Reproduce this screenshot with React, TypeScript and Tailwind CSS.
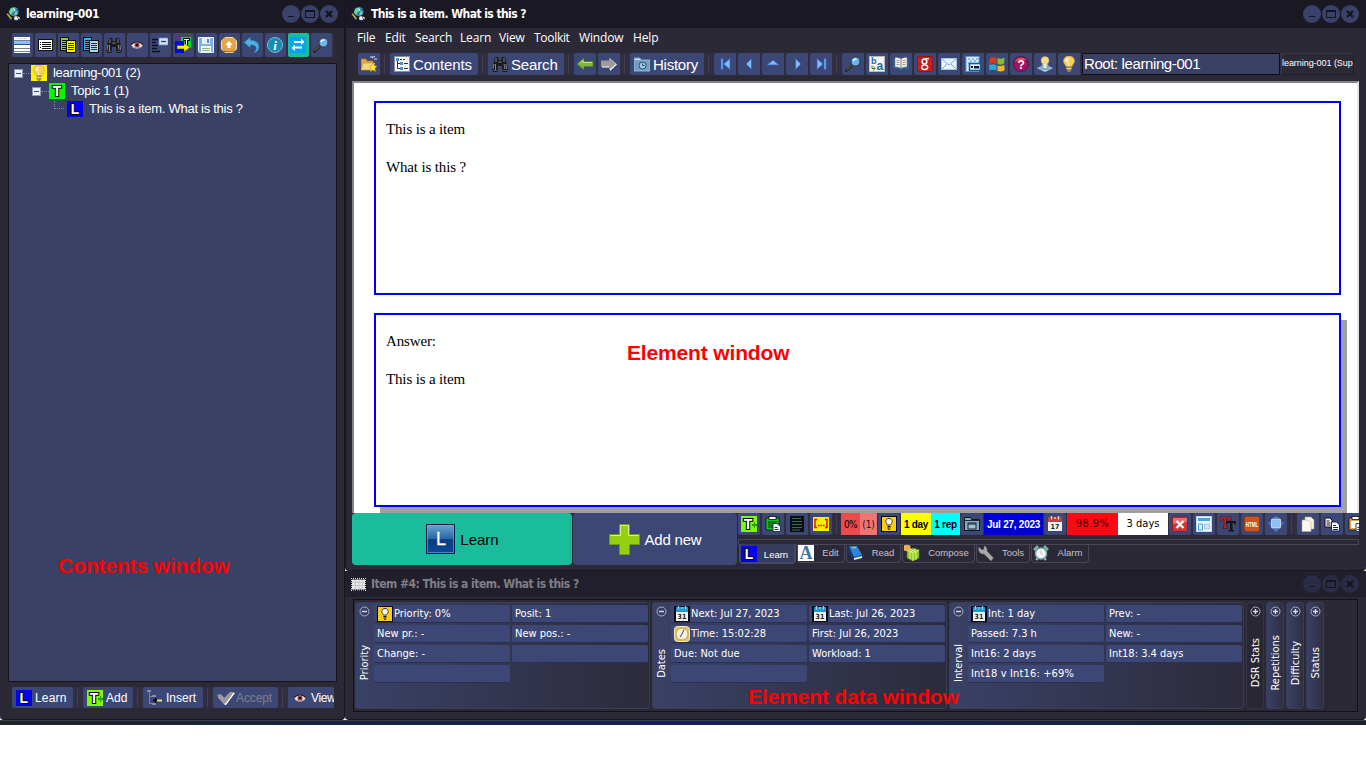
import React from "react";

type Kids = { children?: React.ReactNode };

const Svg = ({ children, className = "w-4 h-4", box = "0 0 16 16" }: Kids & { className?: string; box?: string }) => (
  <svg viewBox={box} className={"shrink-0 block " + className}>{children}</svg>
);

/* ---------- icons ---------- */
const AppIcon = () => (
  <Svg className="w-[15px] h-4">
    <circle cx="8.500" cy="5.500" r="5" fill="#3f7fa8" />
    <path d="M5 2l4-1 1 3-3 2-2 3-2-3zM10 5l3 0-1 4-3 0z" fill="#6fd3a4" />
    <path d="M8 2l2 1-1 2z" fill="#dff6ff" />
    <path d="M12 2.500c1.500 2 1.500 5 0 7" stroke="#1c3a9a" fill="none" />
    <path d="M0 8l2-1 5 6-2 1z" fill="#c9b544" stroke="#000" strokeWidth=".5" />
    <path d="M0 15l3-2 3 2z" fill="#16207c" />
    <circle cx="11" cy="12.500" r="2.400" fill="#f4f4f4" />
    <path d="M11 9.500l4 2v2.500l-2-1z" fill="#e8e8e8" stroke="#111" strokeWidth=".6" />
    <path d="M8 14.500l2 1.500 4-1-1-1z" fill="#1a2a80" />
  </Svg>
);
const Letter = ({ c, bg, plus }: { c: string; bg: string; plus?: boolean }) => (
  <Svg>
    <rect width="16" height="16" fill={bg} />
    <text x={plus ? 7 : 8} y="13" textAnchor="middle" fontFamily="Liberation Sans, sans-serif" fontWeight="700" fontSize="14" fill="#fff" stroke="#000" strokeWidth="2.200" paintOrder="stroke">{c}</text>
    {plus && <path d="M11 8h2V6h1v2h2v2h-2v2h-1v-2h-2z" fill="#2c9a1c" />}
  </Svg>
);
const Bulb = ({ bg }: { bg?: string }) => (
  <Svg>
    {bg && <rect width="16" height="16" fill={bg} />}
    <path d="M8 0C4.600 0 2.500 2.300 2.500 5c0 2.300 1.800 3.300 2.500 5.500h6C11.700 8.300 13.500 7.300 13.500 5c0-2.700-2.100-5-5.500-5z" fill="#f6cf5c" stroke="#d8a233" strokeWidth=".6" />
    <path d="M6 2c-1.500.5-2.200 2-1.500 3.500L7 6l1-4z" fill="#fff6cf" />
    <path d="M7.500 6v4" stroke="#fff3b0" />
    <path d="M5.500 10.500h5v3L9 16H7l-1.500-2.500z" fill="#a98a4d" />
    <path d="M5.500 12.500h5" stroke="#e8d9a8" />
  </Svg>
);
const ListIcon = () => (
  <Svg>
    <rect y="0" width="16" height="16" fill="#fff" />
    <path d="M0 3.500h16M0 11.500h16M0 14.500h16" stroke="#7b808e" />
    <rect y="4" width="16" height="3" fill="#8fc0f5" />
    <path d="M0 7.500h16" stroke="#24518f" />
    <path d="M3 1.500h10" stroke="#ddd" />
  </Svg>
);
const LinesIcon = () => (
  <Svg>
    <rect x="1" y="2" width="15" height="12" fill="#111" />
    <rect x="2" y="3" width="13" height="10" fill="#fff" />
    <path d="M3 5.500h1M3 7.500h1M3 10.500h1M5 5.500h9M5 7.500h9M5 9.500h9M5 11.500h9" stroke="#111" />
  </Svg>
);
const DocsIcon = ({ a, b }: { a: string; b: string }) => (
  <Svg>
    <rect x=".5" y=".5" width="8" height="13" fill={a} stroke="#111" />
    <path d="M2 3.500h5M2 5.500h4M2 7.500h4M2 9.500h4M2 11.500h4" stroke="#111" />
    <rect x="6.500" y="3.500" width="9" height="12" fill={b} stroke="#111" />
    <path d="M8 6.500h6M8 8.500h6M8 10.500h6M8 12.500h6" stroke="#333" />
  </Svg>
);
const Binoculars = () => (
  <Svg>
    <path d="M3 1h3.500v3H9.500V1H13l1.500 6 1.500 6-1 3h-4.500l-.5-6H6l-.5 6H1l-1-3 1.500-6z" fill="#1b1b1e" />
    <path d="M4 2v4M2 8l-1 5M12 2v4M12 8l1 5M3.500 8v6M14 8l.5 5" stroke="#85858c" />
    <path d="M6.500 5h3v2h-3z" fill="#55555c" />
    <path d="M1 14.500h4M11 14.500h4" stroke="#55555c" />
  </Svg>
);
const Eye = () => (
  <Svg>
    <path d="M2 8c3-4 9-4 12 0-3 3.500-9 4-12 0z" fill="#f3eaea" />
    <path d="M2 8c3-4 9-4 12 0" fill="none" stroke="#2b1b22" strokeWidth="1.100" />
    <circle cx="8" cy="8" r="2.600" fill="#9c4a4d" />
    <circle cx="8" cy="8" r="1.300" fill="#1a0b0e" />
    <path d="M3 9.500c3 2.300 7 2.300 10 0" fill="none" stroke="#c9a9a9" />
  </Svg>
);
const LayoutIcon = () => (
  <Svg>
    <path d="M0 2.500h6M0 5.500h4M0 8.500h6M0 11.500h5M0 14.500h8" stroke="#0f0f18" strokeWidth="1.300" />
    <rect x="7" y="1" width="9" height="7" fill="#cfe2fa" stroke="#6d8fc0" strokeWidth=".7" />
    <path d="M9 4.500h5" stroke="#24406f" strokeWidth="1.300" />
  </Svg>
);
const ExportIcon = () => (
  <Svg>
    <rect x="6" width="10" height="11" fill="#00dc2a" />
    <rect y="4" width="9" height="12" fill="#0007e0" />
    <path d="M8 2.500h7M11.500 2v8" stroke="#000" strokeWidth="3" />
    <path d="M9 2.500h5M11.500 3v6" stroke="#fff" strokeWidth="1" />
    <path d="M2 8.500h7V6l6 4.500L9 15v-3H2z" fill="#ffee00" stroke="#333" strokeWidth=".5" />
  </Svg>
);
const Floppy = () => (
  <Svg>
    <path d="M.5.500h15v15h-14l-1-1z" fill="#7fb0e6" stroke="#e3effc" />
    <rect x="4" y="1" width="8" height="6" fill="#e9f2fb" />
    <rect x="9" y="2" width="2" height="4" fill="#5a8cc6" />
    <rect x="3" y="9" width="10" height="6" fill="#f7faf3" />
    <path d="M4 11.500h8M4 13.500h8" stroke="#8fbf7a" />
  </Svg>
);
const UpBox = () => (
  <Svg>
    <path d="M4 .5h8L15.500 4v8L12 15.500H4L.5 12V4z" fill="#e3a646" stroke="#f7dfa4" />
    <path d="M2 14c4 1 8 1 12 0" stroke="#a8681d" fill="none" />
    <path d="M8 4l3.500 4H9.500v3h-3V8h-2z" fill="#fff" />
  </Svg>
);
const Undo = () => (
  <Svg>
    <path d="M0 5.500L6.500 0v3.200C12 3.200 15.500 6 15 10.500c-.3 3-2.500 5-5.500 5.500 2-2 3-3.500 2.500-5.500C11.500 8.500 9.500 8 6.500 8v3z" fill="#4fb0e2" stroke="#1e6fa8" strokeWidth=".6" />
  </Svg>
);
const Info = () => (
  <Svg>
    <circle cx="8" cy="8" r="7.500" fill="#168bb4" stroke="#7dc8e2" strokeWidth=".9" />
    <text x="8" y="12.500" textAnchor="middle" fontFamily="Liberation Serif, serif" fontStyle="italic" fontWeight="700" fontSize="13" fill="#fff">i</text>
  </Svg>
);
const Swap = () => (
  <Svg>
    <rect width="16" height="16" fill="#04a4ee" />
    <path d="M4 4h7V1.500L14.500 5 11 8V6H4zM12 9.500H5V7.500L1.500 11 5 14v-2.500h7z" fill="#fff" />
  </Svg>
);
const Magnifier = () => (
  <Svg>
    <path d="M1.500 14.500l6-6" stroke="#2b2825" strokeWidth="3" strokeLinecap="round" />
    <path d="M1.500 14l5-5" stroke="#8a7c70" strokeWidth=".8" />
    <circle cx="10.500" cy="5.500" r="4.600" fill="#6fb5ea" stroke="#39424f" strokeWidth="1.400" />
    <path d="M8 5c.5-1.500 2-2.200 3.500-2" stroke="#e8f6ff" strokeWidth="1.500" fill="none" />
  </Svg>
);
const FolderStar = () => (
  <Svg>
    <path d="M0 3h5l1 2h6v9H0z" fill="#e6a83b" stroke="#a97618" strokeWidth=".6" />
    <path d="M2 7h12l-2.500 7H0z" fill="#f8d67c" stroke="#b98322" strokeWidth=".5" />
    <path d="M9 1l3 0M11 2l3-2M13 3h3" stroke="#dce6f6" />
    <path d="M12 7l1.300 2.700 2.700.5-2 2 .5 3.300L12 14l-2.500 1.500.5-3.300-2-2 2.700-.5z" fill="#ffec3a" stroke="#c98d08" strokeWidth=".5" />
  </Svg>
);
const ContentsIcon = () => (
  <Svg>
    <rect x=".5" y=".5" width="15" height="15" fill="#f3f4f6" stroke="#8c8f97" />
    <path d="M3.500 4v8.500h3M3.500 7.500h3" stroke="#333" fill="none" />
    <path d="M2 2h3v3H2zM6 6h3v3H6zM6 11h3v3H6z" fill="#4f8fca" />
    <path d="M6 3.500h2M9 3.500h2M10 7.500h4M10 12.500h4" stroke="#333" />
  </Svg>
);
const ArrowL = () => (
  <Svg><path d="M0 8l7-6v3.500h9v5H7V14z" fill="#7db83a" stroke="#4a7d1b" strokeWidth=".6" /><path d="M3 7l3-2.500v2h9" fill="none" stroke="#c3e48c" /></Svg>
);
const ArrowR = () => (
  <Svg><path d="M.5 5h8V2l7.500 6.500L9 15v-3.500H1z" fill="#fff" /><path d="M0 4.500h8V2l7 6-7 6v-3.500H0z" fill="#9b9b9b" /></Svg>
);
const HistoryIcon = () => (
  <Svg>
    <path d="M0 2h6l1 2h9v11H0z" fill="#6f9fc2" stroke="#b2d3e8" strokeWidth=".7" />
    <path d="M1 3.500h5" stroke="#d7ecf9" />
    <circle cx="8.500" cy="9.500" r="3.500" fill="#a6c8de" stroke="#28506f" />
    <path d="M8.500 7.500v2h2" fill="none" stroke="#28506f" />
  </Svg>
);
const Nav = ({ d }: { d: string }) => (
  <Svg><path d={d} fill="#82b9f5" stroke="#2d62b8" strokeWidth=".8" /></Svg>
);
const Translate = () => (
  <Svg>
    <rect x=".5" y=".5" width="15" height="15" fill="#f5f5f1" stroke="#b9b9b2" />
    <text x="2" y="8" fontFamily="Liberation Sans, sans-serif" fontWeight="700" fontSize="9" fill="#1a6aa8">b</text>
    <text x="7.500" y="13.500" fontFamily="Liberation Sans, sans-serif" fontWeight="700" fontSize="12" fill="#1a6aa8">a</text>
    <path d="M3 9.500v3h3M4.500 10.500l1.500 2-1.500 2" fill="none" stroke="#3c8a25" />
  </Svg>
);
const Book = () => (
  <Svg>
    <path d="M0 3h16v10H10l-1 1.500H7L6 13H0z" fill="#2b6092" />
    <path d="M2 1.500c3 0 5 .5 6 1.500v9.500c-1-1-3-1.500-6-1.500zM14 1.500c-3 0-5 .5-6 1.500v9.500c1-1 3-1.500 6-1.500z" fill="#f2efe6" stroke="#777" strokeWidth=".5" />
    <path d="M3.500 4.500h3M3.500 6.500h3M3.500 8.500h3M9.500 4.500h3M9.500 6.500h3M9.500 8.500h3" stroke="#888" strokeWidth=".8" />
  </Svg>
);
const G8 = () => (
  <Svg>
    <rect x=".3" y=".3" width="15.400" height="15.400" rx="2.500" fill="#c81d1d" stroke="#7b0b0b" strokeWidth=".7" />
    <ellipse cx="7.500" cy="5.500" rx="2.300" ry="2.500" fill="none" stroke="#fff" strokeWidth="1.500" />
    <ellipse cx="7.700" cy="11.200" rx="3" ry="2.300" fill="none" stroke="#fff" strokeWidth="1.400" />
    <path d="M8 2.700h4" stroke="#fff" strokeWidth="1.200" />
  </Svg>
);
const Mail = () => (
  <Svg><rect x=".5" y="2.500" width="15" height="11" fill="#eaf3fd" stroke="#a8c6e6" /><path d="M1 3l7 6 7-6M1 13l5-5M15 13l-5-5" fill="none" stroke="#7ea9d6" /></Svg>
);
const Pane = () => (
  <Svg>
    <rect x="1" y=".5" width="13" height="15" fill="#d4eafa" stroke="#5f9fd0" />
    <path d="M3 3h2M7 3h2M11 3h2M5 5h2M9 5h2M3 7h2" stroke="#8cc0e6" strokeWidth="2" />
    <rect x="4.500" y="7.500" width="11" height="7" fill="#eef" stroke="#14618c" strokeWidth="1.600" />
    <path d="M6 10h2v2H6zM9 10h5v2.500H9z" fill="#16202c" />
  </Svg>
);
const WinFlag = () => (
  <Svg>
    <path d="M1 2c2-1 4-1 6.500 0v6C5 7 3 7 0 8z" fill="#d63a1c" />
    <path d="M8.500 2C11 3 13 3 15.500 1.500l-.5 6C13 9 11 9 8.500 8z" fill="#83bd31" />
    <path d="M0 9c3-1 5-1 7.500 0v5.500C5 13.500 3 13.500.5 14.500z" fill="#2ca8d8" />
    <path d="M8.500 9.500c2.500 1 4.500.7 7-.5v5.500c-2.500 1.200-4.500 1.200-7 .5z" fill="#f3b61e" />
  </Svg>
);
const Help = () => (
  <Svg>
    <circle cx="8" cy="8" r="7.500" fill="#a80f62" stroke="#4d1444" strokeWidth=".8" />
    <path d="M2 6c1-4 8-6 11-2-4 0-8 0-11 2z" fill="#e05566" />
    <text x="8" y="12.500" textAnchor="middle" fontFamily="Liberation Sans, sans-serif" fontWeight="700" fontSize="12" fill="#fff">?</text>
  </Svg>
);
const Person = () => (
  <Svg>
    <path d="M0 12l8-3 8 3-8 4z" fill="#bcd9ee" stroke="#4f86ac" strokeWidth=".5" />
    <path d="M5 8h6l2 5c-3 1.500-7 1.500-10 0z" fill="#7fa9c8" />
    <circle cx="8" cy="4.500" r="4" fill="#f2df96" stroke="#b79742" strokeWidth=".5" />
    <path d="M6.500 8h3v4h-3z" fill="#f6edc4" />
  </Svg>
);
const Insert = () => (
  <Svg>
    <path d="M2.500 2v11.500h4M2.500 6.500h4" stroke="#7d8a91" fill="none" />
    <path d="M0 0h4v2H0zM5 5h4v2H5zM5 13h4v2H5z" fill="#7f939e" />
    <path d="M6 10.500h6M8.500 8v5" stroke="#000" strokeWidth="1.500" />
    <path d="M10 9.500h5v2h-5z" fill="#e8e46c" />
  </Svg>
);
const Check = () => (
  <Svg className="w-[18px] h-[15px]" box="0 0 18 15">
    <path d="M1 7l4-1 3 3 6-7 4 1-9 12H8z" fill="#fff" />
    <path d="M0 5l4-1 3 4 6-6 4 0-8.500 11.500H6.500z" fill="#9a9a9a" />
  </Svg>
);
const Paste = ({ green }: { green?: boolean }) => (
  <Svg>
    <path d="M1 2h13v12H1z" fill={green ? "#12c51c" : "#e0a83c"} stroke="#101010" strokeWidth=".8" />
    <rect x="4" y=".5" width="7" height="3" fill="#fff" stroke="#111" strokeWidth=".8" />
    <path d="M3 5h9v7H3z" fill={green ? "#0a7f12" : "#fff"} />
    <path d="M8 7.500h4l3.500 3v5H8z" fill="#f4f6ff" stroke="#1a2a50" strokeWidth=".9" />
    <path d="M9.500 11.500h3M9.500 13.500h4" stroke="#333" />
  </Svg>
);
const TextLines = () => (
  <Svg><rect x="1" width="14" height="16" fill="#0c0d14" /><path d="M3 2.500h9M3 5.500h10M3 8.500h10M3 11.500h10M3 14h8" stroke="#3c7b50" strokeWidth=".9" /></Svg>
);
const Ellipsis = () => (
  <Svg>
    <rect y="1" width="16" height="14" fill="#f9f000" />
    <path d="M4 3.500H2v8h2M12 3.500h2v8h-2" fill="none" stroke="#e31010" strokeWidth="1.500" />
    <path d="M5 9.500h1.600M7.500 9.500h1.600M10 9.500h1.600" stroke="#e31010" strokeWidth="1.700" />
  </Svg>
);
const BulbBox = () => (
  <Svg>
    <rect x=".5" y=".5" width="15" height="15" fill="#fdcd16" stroke="#0a0a0a" />
    <path d="M8 2.500C6 2.500 4.800 3.800 4.800 5.500c0 1.500 1.200 2.200 1.700 3.500h3c.5-1.300 1.700-2 1.700-3.500 0-1.700-1.200-3-3.200-3z" fill="#fff" stroke="#222" strokeWidth=".9" />
    <path d="M6.500 10.500h3M6.500 12h3M7.300 13.500h1.400" stroke="#111" />
  </Svg>
);
const FolderWin = () => (
  <Svg>
    <path d="M.5 1.500h6l1 2h8v11H.5z" fill="#89adc0" stroke="#10161c" />
    <path d="M1 4.500h14" stroke="#1c2b36" />
    <rect x="4" y="7" width="8" height="6" fill="#9fc0d0" stroke="#17222b" />
    <path d="M4 8h8" stroke="#17222b" />
  </Svg>
);
const Calendar = ({ day, blue }: { day: string; blue?: boolean }) => (
  <Svg>
    {blue && <rect width="16" height="16" fill="#08090d" />}
    <rect x={blue ? 2 : 1} y="2" width={blue ? 12 : 14} height="13" fill="#f0f2f2" />
    <rect x={blue ? 2 : 1} y="1" width={blue ? 12 : 14} height="5" fill={blue ? "#1f9ad0" : "#c63f3f"} />
    <path d="M4.500 0v3.500M8 1v2M11.500 0v3.500" stroke={blue ? "#8fd2ee" : "#ddd"} strokeWidth="1.300" />
    <text x="8" y="13" textAnchor="middle" fontFamily="DejaVu Sans, sans-serif" fontWeight="700" fontSize="7" fill="#222">{day}</text>
  </Svg>
);
const RedX = () => (
  <Svg><rect x=".5" y="1" width="15" height="14.500" rx="1" fill="#cf3535" stroke="#8e1313" strokeWidth=".7" /><path d="M1 2h14v4L1 8z" fill="#e2706f" /><path d="M4.500 5l7 7M11.500 5l-7 7" stroke="#fff" strokeWidth="2.300" /></Svg>
);
const Template = () => (
  <Svg><rect x=".5" y=".5" width="15" height="15" fill="#f3f8fc" stroke="#bcdcf0" /><path d="M2 3.500h12" stroke="#3fa6dc" strokeWidth="3" /><path d="M2.500 8h4v6h-4z" fill="#dceef9" stroke="#45a3d6" /><path d="M8.500 8h5v5h-5z" fill="#cfe4f1" stroke="#9cc6de" /></Svg>
);
const TextTool = () => (
  <Svg><path d="M0 1h11v3.500H9L8 3H6.500v8H8v1.500H3V11h1V3H2.500L1.500 4.500H0z" fill="#b3262c" stroke="#450b0e" strokeWidth=".5" /><path d="M6 5h10v3.500h-1.200L14 7h-1.500v7H14v1.500H8.500V14H10V7H8L7.200 8.500H6z" fill="#15151a" /></Svg>
);
const Html = () => (
  <Svg><rect x=".3" y=".3" width="15.400" height="15.400" rx="2" fill="#cb5520" stroke="#80300c" strokeWidth=".7" /><text x="8" y="10.500" textAnchor="middle" textLength="12.500" lengthAdjust="spacingAndGlyphs" fontFamily="Liberation Sans, sans-serif" fontWeight="700" fontSize="7" fill="#fff">HTML</text></Svg>
);
const Resize = () => (
  <Svg><rect x="3.500" y="3" width="9" height="9" rx="1" fill="#8fc0f2" stroke="#dbeafd" strokeWidth=".8" /><path d="M5 2h6L8 0zM5 13h6l-3 3zM2.500 5v5L0 7.500zM13.500 5v5L16 7.500z" fill="#3c7fd8" /></Svg>
);
const Copy1 = () => (
  <Svg><path d="M5 1h6l3 3v9H5z" fill="#f6f2e4" stroke="#b5ac8c" strokeWidth=".6" /><path d="M2 4h6l3 3v8.500H2z" fill="#fbf9f0" stroke="#b5ac8c" strokeWidth=".6" /></Svg>
);
const Copy2 = () => (
  <Svg><path d="M1 2h5l2 2v7H1z" fill="#fff" stroke="#111" /><path d="M2.500 5h3M2.500 7h4M2.500 9h4" stroke="#111" /><path d="M7.500 6h5l3 3v6h-8z" fill="#fff" stroke="#10206e" /><path d="M9 9.500h3M9 11.500h5M9 13.500h5" stroke="#10206e" /></Svg>
);
const AIcon = () => (
  <Svg><rect width="16" height="16" fill="#fff" /><text x="8" y="14" textAnchor="middle" fontFamily="Liberation Serif, serif" fontWeight="700" fontSize="18" fill="#3f769c">A</text></Svg>
);
const BookBlue = () => (
  <Svg><path d="M1 5l1-4 8 0 6 10-1 3-9 2z" fill="#0a3d85" /><path d="M2 1h8l5 9-8 2z" fill="#2e86e0" /><path d="M7 13l8-2v2l-8 2z" fill="#f2e8b8" /><path d="M5 3l4-.5" stroke="#ffd34d" /></Svg>
);
const Cube = () => (
  <Svg><path d="M3 5l6-2 6 2v8l-6 3-6-3z" fill="#8fcc22" stroke="#56860e" strokeWidth=".6" /><path d="M3 5l6 3 6-3M9 8v8M6 4l6 3v8M12 4L6 7v7" fill="none" stroke="#e2f79a" strokeWidth=".9" /><path d="M0 1l3-1 3 1v4L3 6 0 5z" fill="#f0a93c" stroke="#ffe08a" strokeWidth=".6" /></Svg>
);
const Wrench = () => (
  <Svg><path d="M1 2l3 3 2-1V1C8 1 9.500 3 9 6l6.500 7-2.500 3-7-7C3 9.500.5 7 .5 4z" fill="#a8a8a8" stroke="#6a6a6a" strokeWidth=".5" /></Svg>
);
const AlarmIcon = () => (
  <Svg><path d="M1 5l4-4M15 5l-4-4" stroke="#7eb0b2" strokeWidth="2.500" /><path d="M3 15l2-2M13 15l-2-2" stroke="#8db9bb" strokeWidth="2" /><circle cx="8" cy="8.500" r="5.500" fill="#f4f6f6" stroke="#82adb0" strokeWidth="1.500" /><path d="M8 5.500v3l2 1" stroke="#999" fill="none" strokeWidth=".6" /></Svg>
);
const Clock = () => (
  <Svg><rect x=".5" y=".5" width="15" height="15" rx="3" fill="#e2c268" stroke="#f8e9b0" /><circle cx="8" cy="8" r="6" fill="#f8f3df" stroke="#b69643" strokeWidth=".8" /><path d="M10 3.500L8 8l-2 3" stroke="#444" fill="none" /></Svg>
);
const Grid = () => (
  <Svg className="w-[15px] h-[13px]" box="0 0 15 13"><path d="M.5 1h14v11H.5z" fill="#e8e8e8" stroke="#000" strokeWidth="1" /><path d="M0 .5h15M0 12h15M.5 0v13M14.500 0v13" stroke="#ddd" strokeDasharray="1 1" /><path d="M1 4.500h13M1 7.500h13M4.500 2v9M8 2v9M11.500 2v9" stroke="#bbb" strokeWidth=".7" /></Svg>
);

/* ---------- shared parts ---------- */
const Btn = ({ children, className = "w-[22px] justify-center" }: Kids & { className?: string }) => (
  <div className={"h-full shrink-0 rounded-[2px] bg-[#3d4775] flex items-center " + className}>{children}</div>
);
const Sep = () => (
  <div className="w-[10px] h-full shrink-0 flex justify-center items-center"><div className="w-px h-[18px] bg-[#42404e] -translate-x-px" /></div>
);
const Controls = ({ dim }: { dim?: boolean }) => {
  const c = "w-[18px] h-[18px] rounded-full flex items-center justify-center " + (dim ? "bg-[#2a2b45]" : "bg-[#3a426b]");
  return (
    <div className="ml-auto flex gap-px">
      <div className={c}><div className="w-[6px] h-px bg-[#15131c] mt-[5px]" /></div>
      <div className={c}><div className="w-[10px] h-[8px] border border-t-2 border-[#15131c]" /></div>
      <div className={c}><Svg className="w-2 h-2" box="0 0 8 8"><path d="M1 1l6 6M7 1l-6 6" stroke="#15131c" strokeWidth="2.300" /></Svg></div>
    </div>
  );
};
const Expander = () => (
  <div className="w-[9px] h-[9px] bg-[#eef1f8] border border-[#8f98ad] flex items-center justify-center"><div className="w-[5px] h-px bg-[#2c4a9a]" /></div>
);
const Circle = ({ plus }: { plus?: boolean }) => (
  <Svg className="w-[11px] h-[11px]" box="0 0 11 11"><circle cx="5.500" cy="5.500" r="4.500" fill="none" stroke="#aab0c6" /><path d={plus ? "M3 5.500h5M5.500 3v5" : "M3 5.500h5"} stroke="#d6daea" strokeWidth="1.400" /></Svg>
);
const Cell = ({ children }: Kids) => (
  <div className="h-[18px] rounded-[2px] bg-[#3d4775] border-b border-[#2b3050] flex items-center gap-px px-[3px] pt-px whitespace-nowrap overflow-hidden">{children}</div>
);
const Side = ({ label, plus, className = "" }: { label: string; plus?: boolean; className?: string }) => (
  <div className={"w-[18px] shrink-0 flex flex-col items-center pt-[3px] " + className}>
    <Circle plus={plus} />
    <div className="flex-1 flex items-center pt-[1px] pl-px"><span className="[writing-mode:vertical-rl] rotate-180 text-[11px] leading-[14px] text-white whitespace-nowrap">{label}</span></div>
  </div>
);
const Group = ({ label, children, className = "" }: Kids & { label: string; className?: string }) => (
  <div className={"h-[107px] rounded-[3px] border border-[#3a3d58] bg-linear-to-r from-[#3a4166] to-[#2c2b3c] flex " + className}>
    <Side label={label} className="w-[17px] -ml-px" />
    <div className="grid grid-cols-[136px_136px] auto-rows-[18px] gap-x-[2px] gap-y-[2px] pt-[2px] pl-px">{children}</div>
  </div>
);
const Tab = ({ icon, label, className }: { icon: React.ReactNode; label: string; className: string }) => (
  <div className={"shrink-0 h-[18px] rounded-b-[4px] border border-t-0 border-[#494757] flex text-[#c4c2cb] " + className}>
    {icon}<span className="flex-1 text-center pl-[3px]">{label}</span>
  </div>
);
const tahoma = "[font-family:'DejaVu_Sans_Condensed','DejaVu_Sans',sans-serif] [font-stretch:condensed]";
const arial = "[font-family:'Liberation_Sans',sans-serif]";
const segoe = "[font-family:'Open_Sans','Noto_Sans',sans-serif]";

const ContentsWindow = () => (
  <div className="w-[345px] h-[720px] shrink-0 bg-[#2c2937] rounded-b-[4px] border-r border-b border-[#17151e] flex flex-col">
    <div className="h-7 shrink-0 bg-[#1a1822] flex items-center pl-[6px] pr-[6px]">
      <AppIcon /><span className={"ml-[5px] text-[12px] font-bold text-white tracking-[-0.35px] " + tahoma}>learning-001</span>
      <Controls />
    </div>
    <div className="ml-3 mt-[5px] w-[322px] h-6 shrink-0 bg-[#302e40] flex gap-[2px]">
      {[<ListIcon />, <LinesIcon />, <DocsIcon a="#8fd018" b="#f4f000" />, <DocsIcon a="#24b5ee" b="#a7d8e8" />, <Binoculars />, <Eye />, <LayoutIcon />, <ExportIcon />, <Floppy />, <UpBox />, <Undo />, <Info />].map((ic, i) => (
        <Btn key={i} className="w-[21px] pl-[2px]">{ic}</Btn>
      ))}
      <div className="h-full w-[21px] shrink-0 rounded-[2px] bg-[#1abc9c] flex items-center pl-[2px]"><Swap /></div>
      <Btn className="w-[21px] pl-[2px]"><Magnifier /></Btn>
    </div>
    <div className={"ml-2 mt-[6px] w-[329px] h-[619px] shrink-0 border border-[#14121a] bg-[#3a4164] pl-[5px] text-[13px] text-white tracking-[-0.27px] " + arial}>
      <div className="h-[18px] flex items-center"><Expander /><div className="w-2 border-t border-dotted border-[#7e86a4]" /><Bulb bg="#fff200" /><span className="ml-[6px]">learning-001 (2)</span></div>
      <div className="h-[18px] flex items-center pl-[18px]"><Expander /><div className="w-2 border-t border-dotted border-[#7e86a4]" /><Letter c="T" bg="#00f900" /><span className="ml-[6px]">Topic 1 (1)</span></div>
      <div className="h-[18px] flex items-center pl-[40px]"><div className="w-[10px] h-2 -mt-2 ml-0 border-l border-b border-dotted border-[#7e86a4]" /><div className="w-[3px]" /><Letter c="L" bg="#0000fa" /><span className="ml-[6px]">This is a item. What is this ?</span></div>
    </div>
    <div className={"ml-3 mt-[5px] w-[322px] h-[21px] shrink-0 bg-[#302e40] overflow-hidden flex text-[12px] text-white " + arial}>
      <Btn className="w-[61px] pl-1 gap-[3px] tracking-[0.2px]"><Letter c="L" bg="#0000fa" />Learn</Btn><Sep />
      <Btn className="w-[50px] pl-1 gap-[3px]"><Letter c="T" bg="#7cfa00" plus />Add</Btn><Sep />
      <Btn className="w-[60px] pl-1 gap-[3px]"><Insert />Insert</Btn><Sep />
      <Btn className="w-[65px] pl-1 gap-px"><Check /><span className="text-[#7e7f8a] tracking-[-0.1px]">Accept</span></Btn><Sep />
      <Btn className="w-[46px] pl-1 gap-[3px]"><Eye /><span className="tracking-[-0.4px]">View</span></Btn>
    </div>
  </div>
);

const MainToolbar = () => (
  <div className={"ml-[13px] mt-[3px] w-[996px] h-[22px] shrink-0 bg-[#302e40] flex text-[15px] text-white tracking-[-0.15px] " + arial}>
    <Btn><FolderStar /></Btn><Sep />
    <Btn className="w-[88px] pl-1 gap-[3px]"><ContentsIcon /><span className="pt-[2px]">Contents</span></Btn><Sep />
    <Btn className="w-[76px] pl-1 gap-[3px]"><Binoculars /><span className="pt-[2px]">Search</span></Btn><Sep />
    <div className="flex gap-[2px]"><Btn><ArrowL /></Btn><Btn><ArrowR /></Btn></div><Sep />
    <Btn className="w-[74px] pl-1 gap-[3px]"><HistoryIcon /><span className="pt-[2px] tracking-[-0.25px]">History</span></Btn><Sep />
    <div className="flex gap-[2px]">
      {["M4 2.500h2v11H4zM6.500 8l6.500-5.500v11z", "M5 8l5.500-5.500v11z", "M2 9l6-5 6 5z", "M6.500 2.500L12 8l-5.500 5.500z", "M4 2.500L10 8l-6 5.500zM11 2.500h2v11h-2z"].map((d) => <Btn key={d}><Nav d={d} /></Btn>)}
    </div><Sep />
    <div className="flex gap-[2px]">
      {[<Magnifier />, <Translate />, <Book />, <G8 />, <Mail />, <Pane />, <WinFlag />, <Help />, <Person />, <Bulb />].map((ic, i) => <Btn key={i}>{ic}</Btn>)}
    </div>
    <div className="ml-[2px] w-[198px] shrink-0 border border-[#100e15] bg-[#3a4164] pl-px pt-px flex items-center tracking-[-0.4px]">Root: learning-001</div>
    <div className="ml-px w-[73px] shrink-0 border border-[#201e2a] border-t-[#3a3848] border-l-[#3a3848] bg-[#2c2937] whitespace-nowrap text-[9px] leading-[19px] tracking-[-0.05px]">learning-001 (Sup</div>
  </div>
);

const ElementWindow = () => (
  <div className="h-[571px] shrink-0 bg-[#2c2937] rounded-b-[4px] border-l border-b border-[#17151e] flex flex-col">
    <div className="h-7 -ml-px shrink-0 bg-[#1a1822] flex items-center pl-[6px] pr-[7px]">
      <AppIcon /><span className={"ml-[5px] text-[12px] font-bold text-white tracking-[-0.56px] " + tahoma}>This is a item. What is this ?</span>
      <Controls />
    </div>
    <div className={"h-[22px] -ml-px shrink-0 pl-3 pb-[2px] flex items-center text-[12px] text-white tracking-[-0.15px] " + segoe}>
      <span className="w-[28px]">File</span><span className="w-[30px]">Edit</span><span className="w-[45px]">Search</span><span className="w-[39px]">Learn</span><span className="w-[35px]">View</span><span className="w-[45px] tracking-[-0.3px]">Toolkit</span><span className="w-[54px]">Window</span><span>Help</span>
    </div>
    <div className="-ml-px flex flex-col">
      <MainToolbar />
      <div className="ml-[7px] mt-[6px] w-[1007px] h-[432px] shrink-0 bg-white border-2 border-b-0 border-t-[#85838a] border-l-[#85838a] border-r-[#e3e3e3] overflow-hidden pl-5 pt-[18px] [font-family:'Liberation_Serif',serif] text-[15px] leading-[18px] tracking-[-0.15px] text-black">
        <div className="w-[967px] h-[194px] border-2 border-[#0000f4] pl-[10px] pt-[17px]"><p>This is a item</p><p className="mt-5">What is this ?</p></div>
        <div className="mt-[18px] w-[967px] h-[194px] border-2 border-[#0000f4] bg-white pl-[10px] pt-[17px] shadow-[6px_7px_0_#a0a0a0]"><p>Answer:</p><p className="mt-5">This is a item</p></div>
      </div>
      <div className={"ml-[7px] h-[52px] w-[1007px] flex overflow-hidden " + arial}>
        <div className="w-[220px] shrink-0 rounded-[4px] bg-[#1abc9c] flex items-center justify-center gap-[5px] text-[15px] text-black pl-px">
          <Svg className="w-[29px] h-[30px]" box="0 0 29 30">
            <defs><linearGradient id="lg" x2="0" y2="1"><stop offset="0" stopColor="#6ea5d2" /><stop offset=".5" stopColor="#2565a5" /><stop offset=".52" stopColor="#0a3c80" /><stop offset="1" stopColor="#0d4a96" /></linearGradient></defs>
            <rect x=".5" y=".5" width="28" height="29" fill="url(#lg)" stroke="#06204e" /><rect x="1.500" y="1.500" width="26" height="27" fill="none" stroke="#79a8d4" strokeOpacity=".6" />
            <text x="15" y="21" textAnchor="middle" fontFamily="Liberation Sans, sans-serif" fontSize="18" fill="#fff" stroke="#fff" strokeWidth=".3">L</text>
          </Svg><span className="pt-[2px]">Learn</span>
        </div>
        <div className="ml-px w-[164px] shrink-0 rounded-[4px] bg-[#3d4775] flex items-center justify-center gap-[5px] text-[15px] text-white">
          <Svg className="w-[31px] h-[31px]" box="0 0 31 31"><path d="M10.500.500h10v10h10v10h-10v10h-10v-10H.5v-10h10z" fill="#95cf12" stroke="#6d9f0b" /><path d="M11.500 12V1.500h8V11.500h10" fill="none" stroke="#d5f08c" /><path d="M1.500 11.500h10" stroke="#d5f08c" /></Svg>
          <span className="pt-[2px] tracking-[-0.2px]">Add new</span>
        </div>
        <div className="ml-px flex-1 min-w-0 flex flex-col">
          <div className={"h-[22px] shrink-0 flex bg-[#302e40] overflow-hidden text-[11px] " + tahoma}>
            <div className="flex gap-[2px]"><Btn><Letter c="T" bg="#7cfa00" plus /></Btn><Btn><Paste green /></Btn><Btn><TextLines /></Btn><Btn><Ellipsis /></Btn></div>
            <Sep />
            <div className="-ml-px w-[19px] shrink-0 bg-[#ea4b4d] flex items-center justify-center text-[10px] text-black tracking-[-0.6px]">0%</div>
            <div className="w-[17px] shrink-0 bg-[#ef7474] flex items-center justify-center text-[10px] text-[#331111]">(1)</div>
            <Btn className="ml-px w-[22px] justify-center"><BulbBox /></Btn>
            <div className={"ml-px w-[30px] shrink-0 bg-[#ffff00] flex items-center justify-center font-bold text-[10px] tracking-[-0.3px] text-black whitespace-nowrap " + arial}>1 day</div>
            <div className={"w-[29px] shrink-0 bg-[#00ffff] flex items-center justify-center font-bold text-[10px] tracking-[-0.3px] text-black whitespace-nowrap " + arial}>1 rep</div>
            <Btn className="ml-px w-[22px] justify-center"><FolderWin /></Btn>
            <div className={"ml-px w-[59px] shrink-0 bg-[#0000d2] flex items-center justify-center font-bold text-[10px] tracking-[-0.25px] text-white whitespace-nowrap " + arial}>Jul 27, 2023</div>
            <Btn className="ml-px w-[22px] justify-center"><Calendar day="17" /></Btn>
            <div className="ml-px w-[51px] shrink-0 bg-[#ff0814] flex items-center justify-center text-[#3a0000] tracking-[0.4px]">98.9%</div>
            <div className="w-[50px] shrink-0 bg-white flex items-center justify-center text-black">3 days</div>
            <div className="ml-px flex gap-[2px]"><Btn><RedX /></Btn><Btn><Template /></Btn><Btn><TextTool /></Btn><Btn><Html /></Btn><Btn><Resize /></Btn></div>
            <Sep />
            <div className="flex gap-[2px]"><Btn><Copy1 /></Btn><Btn><Copy2 /></Btn><Btn><Paste /></Btn></div>
          </div>
          <div className="mt-[4px] h-[6px] shrink-0 border border-[#494757]" />
          <div className={"h-[20px] -mt-px flex text-[9.500px] leading-[16px] " + arial}>
            <div className="ml-px w-[57px] h-[20px] shrink-0 rounded-b-[4px] border-2 border-t-0 border-[#414869] bg-[#363c5c] text-white flex pt-[2px]"><Letter c="L" bg="#0000fa" /><span className="flex-1 text-center leading-[17px] pl-px">Learn</span></div>
            <Tab className="ml-px w-[48px] mt-px" icon={<AIcon />} label="Edit" />
            <Tab className="ml-px w-[55px] mt-px" icon={<BookBlue />} label="Read" />
            <Tab className="ml-px w-[73px] mt-px pl-px" icon={<Cube />} label="Compose" />
            <Tab className="ml-px w-[54px] mt-px pl-px" icon={<Wrench />} label="Tools" />
            <Tab className="ml-px w-[58px] mt-px pl-px" icon={<AlarmIcon />} label="Alarm" />
          </div>
        </div>
      </div>
    </div>
  </div>
);

const DataWindow = () => (
  <div className={"h-[149px] shrink-0 bg-[#2c2937] rounded-b-[4px] border-b border-[#17151e] text-[11px] text-white " + tahoma}>
    <div className="h-[26px] bg-[#211f2b] flex items-center pl-[6px] pr-[7px]"><Grid /><span className="ml-[5px] text-[12px] font-bold text-[#807e85] tracking-[-0.52px]">Item #4: This is a item. What is this ?</span><Controls dim /></div>
    <div className="ml-2 mt-[2px] w-[1005px] h-[113px] border border-[#121018] flex pt-[2px] pl-px">
      <Group label="Priority" className="w-[295px]">
        <Cell><BulbBox />Priority: 0%</Cell><Cell>Posit: 1</Cell><Cell>New pr.: -</Cell><Cell>New pos.: -</Cell><Cell>Change: -</Cell><Cell /><Cell />
      </Group>
      <Group label="Dates" className="ml-[2px] w-[295px]">
        <Cell><Calendar day="31" blue />Next: Jul 27, 2023</Cell><Cell><Calendar day="31" blue />Last: Jul 26, 2023</Cell><Cell><Clock />Time: 15:02:28</Cell><Cell>First: Jul 26, 2023</Cell><Cell>Due: Not due</Cell><Cell>Workload: 1</Cell><Cell />
      </Group>
      <Group label="Interval" className="ml-[2px] w-[295px]">
        <Cell><Calendar day="31" blue />Int: 1 day</Cell><Cell>Prev: -</Cell><Cell>Passed: 7.3 h</Cell><Cell>New: -</Cell><Cell>Int16: 2 days</Cell><Cell>Int18: 3.4 days</Cell><Cell><span className="tracking-[0.15px]">Int18 v Int16: +69%</span></Cell>
      </Group>
      <div className="ml-[2px] flex gap-[2px] h-[107px]">
        <Side plus label="DSR Stats" className="rounded-[3px] border border-[#35334a] bg-[#2a2734]" />
        <Side plus label="Repetitions" className="rounded-[3px] border border-[#3a3d58] bg-linear-to-r from-[#3a4166] to-[#2e2f43]" />
        <Side plus label="Difficulty" className="rounded-[3px] border border-[#3a3d58] bg-linear-to-r from-[#3a4166] to-[#2e2f43]" />
        <Side plus label="Status" className="rounded-[3px] border border-[#3a3d58] bg-linear-to-r from-[#3a4166] to-[#2e2f43]" />
      </div>
    </div>
  </div>
);

export default function App() {
  return (
    <div className="relative w-[1366px] h-[768px] bg-white overflow-hidden">
      <div className="flex h-[720px]">
        <ContentsWindow />
        <div className="w-[1021px] flex flex-col"><ElementWindow /><DataWindow /></div>
      </div>
      <div className="h-[5px] border-t border-[#3a3f48] bg-linear-to-r from-[#202329] via-[#13205c] to-[#1b202b]" />
      <div className={"text-[21px] leading-6 font-bold text-[#ff0000] whitespace-nowrap tracking-[-0.15px] " + arial}>
        <div className="absolute left-[58px] top-[554px]">Contents window</div>
        <div className="absolute left-[627px] top-[341px]">Element window</div>
        <div className="absolute left-[748px] top-[685px]">Element data window</div>
      </div>
    </div>
  );
}
